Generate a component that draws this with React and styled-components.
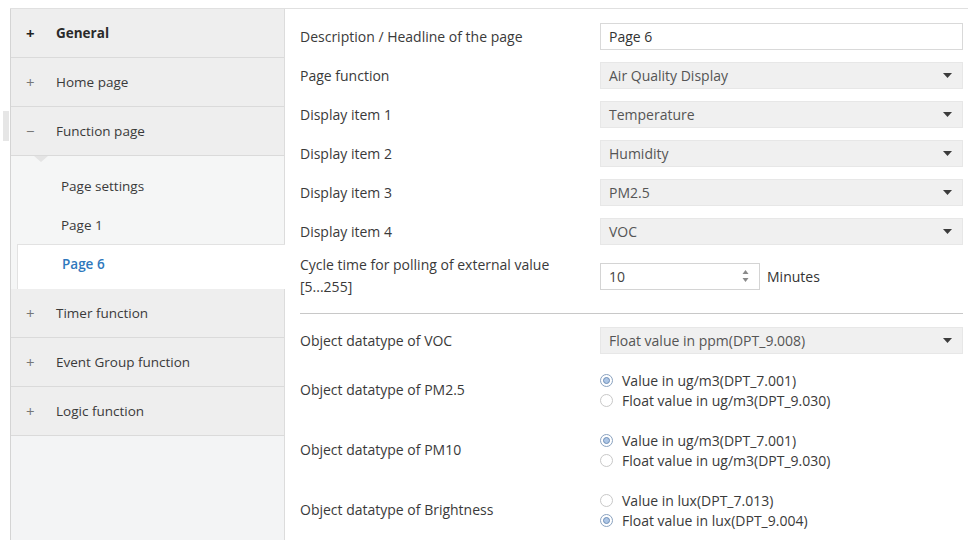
import React from "react";
import styled, { createGlobalStyle } from "styled-components";

const GlobalStyle = createGlobalStyle`
  html, body {
    margin: 0;
    padding: 0;
    background: #fff;
  }
  body {
    font-family: "Open Sans", "Liberation Sans", sans-serif;
    font-size: 13.5px;
    color: #3a3a3a;
  }
`;

// sidebar content
const topMenu = [
  { label: "General", sign: "+", bold: true },
  { label: "Home page", sign: "+" },
  { label: "Function page", sign: "−", open: true },
];
const subMenu = ["Page settings", "Page 1", "Page 6"];
const bottomMenu = ["Timer function", "Event Group function", "Logic function"];

const selectRows = [
  { label: "Page function", value: "Air Quality Display" },
  { label: "Display item 1", value: "Temperature" },
  { label: "Display item 2", value: "Humidity" },
  { label: "Display item 3", value: "PM2.5" },
  { label: "Display item 4", value: "VOC" },
];

const radioRows = [
  {
    label: "Object datatype of PM2.5",
    options: ["Value in ug/m3(DPT_7.001)", "Float value in ug/m3(DPT_9.030)"],
    checked: 0,
  },
  {
    label: "Object datatype of PM10",
    options: ["Value in ug/m3(DPT_7.001)", "Float value in ug/m3(DPT_9.030)"],
    checked: 0,
  },
  {
    label: "Object datatype of Brightness",
    options: ["Value in lux(DPT_7.013)", "Float value in lux(DPT_9.004)"],
    checked: 1,
  },
];

function Arrow() {
  return (
    <svg width="9" height="5" viewBox="0 0 9 5">
      <path d="M0 0 L9 0 L4.5 5 Z" fill="#3c3c3c" />
    </svg>
  );
}

function Spinner() {
  return (
    <svg width="7" height="14" viewBox="0 0 7 14">
      <path d="M3.5 1 L6.5 5 L0.5 5 Z" fill="#8a8a8a" />
      <path d="M0.5 9 L6.5 9 L3.5 13 Z" fill="#8a8a8a" />
    </svg>
  );
}

function App() {
  return (
    <>
      <GlobalStyle />
      <Page>
        <Frame>
          <Sidebar>
            {topMenu.map(item => (
              <MenuRow key={item.label} $open={item.open}>
                <Sign $bold={item.bold}>{item.sign}</Sign>
                <MenuText $bold={item.bold}>{item.label}</MenuText>
              </MenuRow>
            ))}
            <SubArea>
              {subMenu.map(name => (
                <SubItem key={name} $active={name === "Page 6"}>
                  {name}
                </SubItem>
              ))}
            </SubArea>
            {bottomMenu.map(name => (
              <MenuRow key={name}>
                <Sign>+</Sign>
                <MenuText>{name}</MenuText>
              </MenuRow>
            ))}
          </Sidebar>

          <Content>
            <FieldRow>
              <Label>Description / Headline of the page</Label>
              <TextBox>Page 6</TextBox>
            </FieldRow>
            {selectRows.map(row => (
              <FieldRow key={row.label}>
                <Label>{row.label}</Label>
                <SelectBox>
                  <span>{row.value}</span>
                  <Arrow />
                </SelectBox>
              </FieldRow>
            ))}
            <FieldRow $tall>
              <Label>
                Cycle time for polling of external value
                <br />
                [5...255]
              </Label>
              <SpinRow>
                <SpinBox>
                  <span>10</span>
                  <Spinner />
                </SpinBox>
                <Unit>Minutes</Unit>
              </SpinRow>
            </FieldRow>

            <Divider />

            <FieldRow>
              <Label>Object datatype of VOC</Label>
              <SelectBox>
                <span>Float value in ppm(DPT_9.008)</span>
                <Arrow />
              </SelectBox>
            </FieldRow>

            {radioRows.map(row => (
              <RadioRow key={row.label}>
                <Label>{row.label}</Label>
                <RadioGroup>
                  {row.options.map((opt, i) => (
                    <RadioOption key={opt}>
                      <RadioCircle $checked={i === row.checked} />
                      <span>{opt}</span>
                    </RadioOption>
                  ))}
                </RadioGroup>
              </RadioRow>
            ))}
          </Content>
        </Frame>
      </Page>
    </>
  );
}

export default App;

const Page = styled.div`
  padding: 8px 0 0 10px;
  height: 540px;
  box-sizing: border-box;
  overflow: hidden;
`;

const Frame = styled.div`
  display: flex;
  height: 100%;
  border-top: 1px solid #e0e0e0;
`;

const Sidebar = styled.div`
  width: 275px;
  flex-shrink: 0;
  box-sizing: border-box;
  border-left: 1px solid #d4d4d4;
  border-right: 1px solid #dcdcdc;
  background: #f3f4f5;
  display: flex;
  flex-direction: column;
`;

const MenuRow = styled.div`
  position: relative;
  height: 48px;
  border-bottom: 1px solid #dadada;
  background: #eeeeee;
  display: flex;
  align-items: center;
  padding-left: 15px;
  color: #333;

  // small handle on the left edge of the expanded group
  &::before {
    content: "";
    display: ${({ $open }) => ($open ? "block" : "none")};
    position: absolute;
    left: -8px;
    top: 4px;
    width: 6px;
    height: 30px;
    background: #e6e6e6;
  }

  // notch pointing to the child pages
  &::after {
    content: "";
    display: ${({ $open }) => ($open ? "block" : "none")};
    position: absolute;
    left: 23px;
    bottom: -7px;
    border-left: 7px solid transparent;
    border-right: 7px solid transparent;
    border-top: 6px solid #e4e4e4;
  }
`;

const Sign = styled.span`
  width: 30px;
  font-size: 15px;
  font-weight: ${({ $bold }) => ($bold ? 700 : 400)};
  color: ${({ $bold }) => ($bold ? "#222" : "#777")};
`;

const MenuText = styled.span`
  font-weight: ${({ $bold }) => ($bold ? 700 : 400)};
  color: ${({ $bold }) => ($bold ? "#2a2a2a" : "#3a3a3a")};
`;

const SubArea = styled.div`
  background: #f5f6f6;
  padding-top: 10px;
  display: flex;
  flex-direction: column;
`;

const SubItem = styled.div`
  height: ${({ $active }) => ($active ? "45px" : "39px")};
  box-sizing: border-box;
  display: flex;
  align-items: center;
  padding-left: ${({ $active }) => ($active ? "44px" : "50px")};
  padding-bottom: ${({ $active }) => ($active ? "6px" : "0")};
  margin-left: ${({ $active }) => ($active ? "6px" : "0")};
  margin-right: ${({ $active }) => ($active ? "-1px" : "0")};
  background: ${({ $active }) => ($active ? "#fff" : "transparent")};
  border-top: ${({ $active }) => ($active ? "1px solid #e2e2e2" : "none")};
  border-left: ${({ $active }) => ($active ? "1px solid #e2e2e2" : "none")};
  color: ${({ $active }) => ($active ? "#2f78bd" : "#3a3a3a")};
  font-weight: ${({ $active }) => ($active ? 600 : 400)};
`;

const Content = styled.div`
  flex: 1;
  padding: 8px 5px 0 15px;
  display: flex;
  flex-direction: column;
  font-size: 14px;
`;

const FieldRow = styled.div`
  display: grid;
  grid-template-columns: 300px 1fr;
  align-items: center;
  height: ${({ $tall }) => ($tall ? "50px" : "39px")};
`;

const Label = styled.div`
  line-height: 22px;
  color: #3a3a3a;
`;

const SelectBox = styled.div`
  height: 27px;
  box-sizing: border-box;
  background: #f0f0f0;
  border: 1px solid #e7e7e7;
  display: flex;
  align-items: center;
  justify-content: space-between;
  padding: 0 10px 0 8px;
  color: #555;
`;

const TextBox = styled.div`
  height: 27px;
  box-sizing: border-box;
  background: #fff;
  border: 1px solid #d9d9d9;
  display: flex;
  align-items: center;
  padding: 0 8px;
  color: #333;
`;

const SpinRow = styled.div`
  display: flex;
  align-items: center;
`;

const SpinBox = styled.div`
  width: 160px;
  height: 27px;
  box-sizing: border-box;
  border: 1px solid #d4d4d4;
  display: flex;
  align-items: center;
  justify-content: space-between;
  padding: 0 10px 0 8px;
  color: #444;
`;

const Unit = styled.span`
  margin-left: 7px;
  color: #333;
`;

const Divider = styled.div`
  height: 1px;
  background: #c8c8c8;
  margin: 12px 0 7px;
`;

const RadioRow = styled.div`
  display: grid;
  grid-template-columns: 300px 1fr;
  align-items: center;
  height: 60px;
`;

const RadioGroup = styled.div`
  display: flex;
  flex-direction: column;
`;

const RadioOption = styled.div`
  height: 20px;
  display: flex;
  align-items: center;
  gap: 9px;
  color: #3a3a3a;
`;

const RadioCircle = styled.span`
  width: 13px;
  height: 13px;
  box-sizing: border-box;
  border-radius: 50%;
  border: 1px solid ${({ $checked }) => ($checked ? "#8aa2bf" : "#c8c8c8")};
  background: #fff;
  display: flex;
  align-items: center;
  justify-content: center;

  &::after {
    content: "";
    display: ${({ $checked }) => ($checked ? "block" : "none")};
    width: 7px;
    height: 7px;
    box-sizing: border-box;
    border-radius: 50%;
    background: #adc6e6;
    border: 1px solid #6f8fb6;
  }
`;
